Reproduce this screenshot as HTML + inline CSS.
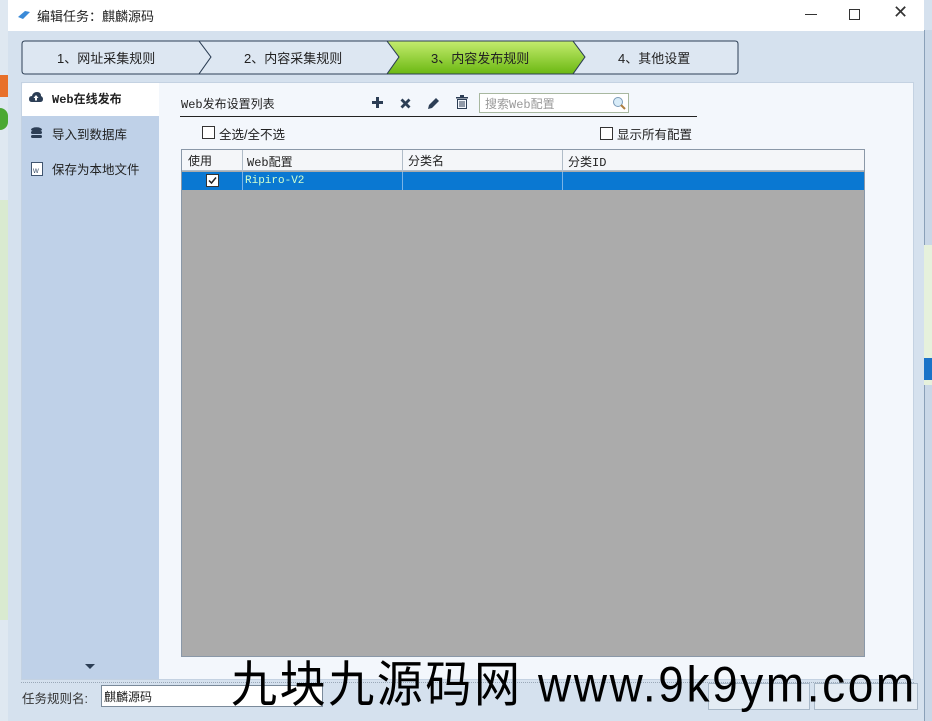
<!DOCTYPE html>
<html><head><meta charset="utf-8"><style>
*{box-sizing:border-box;margin:0;padding:0}
body{width:932px;height:721px;overflow:hidden;position:relative;background:#d5e1ee;font-family:"Liberation Sans","Noto Sans CJK SC",sans-serif;font-size:12px;color:#222}
.abs{position:absolute}
.mono{font-family:"Liberation Mono","Noto Sans CJK SC",monospace}
</style></head><body>
<div class="abs" style="left:0;top:0;width:8px;height:721px;background:#dfe8f1"></div>
<div class="abs" style="left:0;top:75px;width:8px;height:22px;background:#e8702a"></div>
<div class="abs" style="left:0;top:108px;width:8px;height:22px;background:#4aa832;border-radius:0 11px 11px 0"></div>
<div class="abs" style="left:0;top:200px;width:8px;height:420px;background:#d9ead0"></div>
<div class="abs" style="left:924px;top:30px;width:8px;height:691px;background:#c9d7e7;border-left:1px solid #8aa0b8"></div>
<div class="abs" style="left:924px;top:245px;width:8px;height:140px;background:#e6f1dc"></div>
<div class="abs" style="left:924px;top:358px;width:8px;height:22px;background:#1a73c8"></div>
<div class="abs" style="left:8px;top:0;width:916px;height:31px;background:#fff"></div>
<svg class="abs" style="left:17px;top:10px" width="14" height="10"><path d="M1 7 L8 1 L13 2 L6 9 Z" fill="#3a8ad8"/></svg>
<div class="abs" style="left:37px;top:6px;font-size:13px;color:#222">编辑任务：麒麟源码</div>
<div class="abs" style="left:805px;top:14px;width:12px;height:1px;background:#333"></div>
<div class="abs" style="left:849px;top:9px;width:11px;height:11px;border:1px solid #333"></div>
<div class="abs" style="left:893px;top:2px;font-size:18px;color:#333">✕</div>
<svg class="abs" style="left:21px;top:40px" width="718" height="35">
<path d="M1 4 Q1 1 4 1 L178 1 L190 17 L178 34 L4 34 Q1 34 1 31Z" fill="#dde7f2" stroke="#2d3f55"/>
<path d="M178 1 L366 1 L378 17 L366 34 L178 34 L190 17Z" fill="#dde7f2" stroke="#2d3f55"/>
<defs><linearGradient id="g" x1="0" y1="0" x2="0" y2="1"><stop offset="0" stop-color="#c4ec6e"/><stop offset="1" stop-color="#6bb812"/></linearGradient></defs>
<path d="M366 1 L552 1 L564 17 L552 34 L366 34 L378 17Z" fill="url(#g)" stroke="#2d3f55"/>
<path d="M552 1 L714 1 Q717 1 717 4 L717 31 Q717 34 714 34 L552 34 L564 17Z" fill="#dde7f2" stroke="#2d3f55"/>
</svg>
<div class="abs" style="left:57px;top:48px;font-size:13px">1、网址采集规则</div>
<div class="abs" style="left:244px;top:48px;font-size:13px">2、内容采集规则</div>
<div class="abs" style="left:431px;top:48px;font-size:13px">3、内容发布规则</div>
<div class="abs" style="left:618px;top:48px;font-size:13px">4、其他设置</div>
<div class="abs" style="left:21px;top:82px;width:893px;height:598px;background:#f3f7fc;border:1px solid #c4d2e2"></div>
<div class="abs" style="left:22px;top:116px;width:137px;height:563px;background:#bfd1e8"></div>
<div class="abs" style="left:22px;top:83px;width:137px;height:33px;background:#fff;border-radius:3px 0 0 0"></div>
<svg class="abs" style="left:29px;top:92px" width="14" height="11"><path d="M3 10 Q0 10 0 7 Q0 4 3 4 Q4 0 8 0 Q12 0 12 4 Q14 5 14 7 Q14 10 11 10Z" fill="#2c3e55"/><path d="M7 3 L4.5 6 L6 6 L6 8.5 L8 8.5 L8 6 L9.5 6Z" fill="#fff"/></svg>
<div class="abs mono" style="left:52px;top:90px;font-weight:bold;font-size:12px">Web在线发布</div>
<svg class="abs" style="left:31px;top:127px" width="11" height="13"><ellipse cx="5.5" cy="2.5" rx="5.5" ry="2.2" fill="#2c3e55"/><rect x="0" y="4" width="11" height="3" rx="1.5" fill="#2c3e55"/><rect x="0" y="8" width="11" height="3" rx="1.5" fill="#2c3e55"/></svg>
<div class="abs" style="left:52px;top:124px;font-size:12.5px">导入到数据库</div>
<svg class="abs" style="left:31px;top:162px" width="12" height="14"><rect x=".5" y=".5" width="11" height="13" fill="#fff" stroke="#405570"/><text x="2" y="11" font-size="8" fill="#405570" font-family="Liberation Sans">w</text></svg>
<div class="abs" style="left:52px;top:159px;font-size:12.5px">保存为本地文件</div>
<div class="abs" style="left:85px;top:664px;width:0;height:0;border-left:5px solid transparent;border-right:5px solid transparent;border-top:5px solid #2c3e55"></div>
<div class="abs mono" style="left:181px;top:95px;font-size:12px">Web发布设置列表</div>
<div class="abs" style="left:180px;top:116px;width:517px;height:1px;background:#222"></div>
<svg class="abs" style="left:371px;top:96px" width="13" height="13"><path d="M6.5 1 V12 M1 6.5 H12" stroke="#2c3e55" stroke-width="3"/></svg>
<svg class="abs" style="left:400px;top:98px" width="11" height="11"><path d="M1.5 1.5 L9.5 9.5 M9.5 1.5 L1.5 9.5" stroke="#2c3e55" stroke-width="2.8"/></svg>
<svg class="abs" style="left:427px;top:96px" width="14" height="14"><path d="M1 13 L2 9 L9 2 L12 5 L5 12Z" fill="#2c3e55"/></svg>
<svg class="abs" style="left:456px;top:95px" width="12" height="14"><rect x="0" y="2" width="12" height="1.5" fill="#2c3e55"/><rect x="4" y="0" width="4" height="2" fill="#2c3e55"/><rect x="1.5" y="4.5" width="9" height="9" fill="none" stroke="#2c3e55"/><path d="M4 6 V12 M6 6 V12 M8 6 V12" stroke="#2c3e55"/></svg>
<div class="abs" style="left:479px;top:93px;width:150px;height:20px;background:#fff;border:1px solid #a8b8a0"></div>
<div class="abs mono" style="left:485px;top:95px;color:#999;font-size:12px">搜索Web配置</div>
<svg class="abs" style="left:612px;top:96px" width="14" height="14"><circle cx="6" cy="6" r="4.5" fill="#d8ecf8" stroke="#7a9ab8"/><path d="M9 9 L13 13" stroke="#b08040" stroke-width="2"/></svg>
<div class="abs" style="left:202px;top:126px;width:13px;height:13px;border:1px solid #333;background:#fff"></div>
<div class="abs" style="left:219px;top:124px;font-size:12.5px">全选/全不选</div>
<div class="abs" style="left:600px;top:127px;width:13px;height:13px;border:1px solid #333;background:#fff"></div>
<div class="abs" style="left:617px;top:124px;font-size:12.5px">显示所有配置</div>
<div class="abs" style="left:181px;top:149px;width:684px;height:508px;background:#ababab;border:1px solid #8a98a8"></div>
<div class="abs" style="left:182px;top:150px;width:682px;height:21px;background:#f4f6f9;border-bottom:1px solid #b0bcc8"></div>
<div class="abs" style="left:242px;top:150px;width:1px;height:40px;background:#b0bcc8"></div>
<div class="abs" style="left:402px;top:150px;width:1px;height:40px;background:#b0bcc8"></div>
<div class="abs" style="left:562px;top:150px;width:1px;height:40px;background:#b0bcc8"></div>
<div class="abs" style="left:188px;top:152px">使用</div>
<div class="abs mono" style="left:247px;top:153px">Web配置</div>
<div class="abs" style="left:408px;top:152px">分类名</div>
<div class="abs mono" style="left:568px;top:153px">分类ID</div>
<div class="abs" style="left:182px;top:172px;width:682px;height:18px;background:#0a78d2"></div>
<div class="abs" style="left:242px;top:172px;width:1px;height:18px;background:#7ab3e6"></div>
<div class="abs" style="left:402px;top:172px;width:1px;height:18px;background:#7ab3e6"></div>
<div class="abs" style="left:562px;top:172px;width:1px;height:18px;background:#7ab3e6"></div>
<div class="abs" style="left:206px;top:174px;width:13px;height:13px;background:#fff;border:1px solid #333"></div>
<svg class="abs" style="left:207px;top:175px" width="11" height="11"><path d="M2 5.5 L4.5 8 L9 2.5" stroke="#222" stroke-width="1.5" fill="none"/></svg>
<div class="abs mono" style="left:245px;top:175px;color:#cfffcf;font-size:11px">Ripiro-V2</div>
<div class="abs" style="left:21px;top:682px;width:893px;border-top:1px dotted #9aa8b8"></div>
<div class="abs" style="left:22px;top:688px;font-size:12.5px;color:#333">任务规则名:</div>
<div class="abs" style="left:101px;top:685px;width:222px;height:22px;background:#fff;border:1px solid #7a8a9a"></div>
<div class="abs" style="left:104px;top:688px;font-size:12px">麒麟源码</div>
<div class="abs" style="left:708px;top:683px;width:102px;height:27px;border:1px solid #a8b8c8;background:#e4ecf4"></div>
<div class="abs" style="left:814px;top:683px;width:104px;height:27px;border:1px solid #a8b8c8;background:#e4ecf4"></div>
<div class="abs" style="left:231px;top:656px;font-size:46px;line-height:56px;color:#000;white-space:nowrap;letter-spacing:2.6px;transform:scaleY(1.08);transform-origin:0 50%;font-family:'Liberation Sans','Noto Sans CJK SC',sans-serif">九块九源码网 www.9k9ym.com</div>
</body></html>
